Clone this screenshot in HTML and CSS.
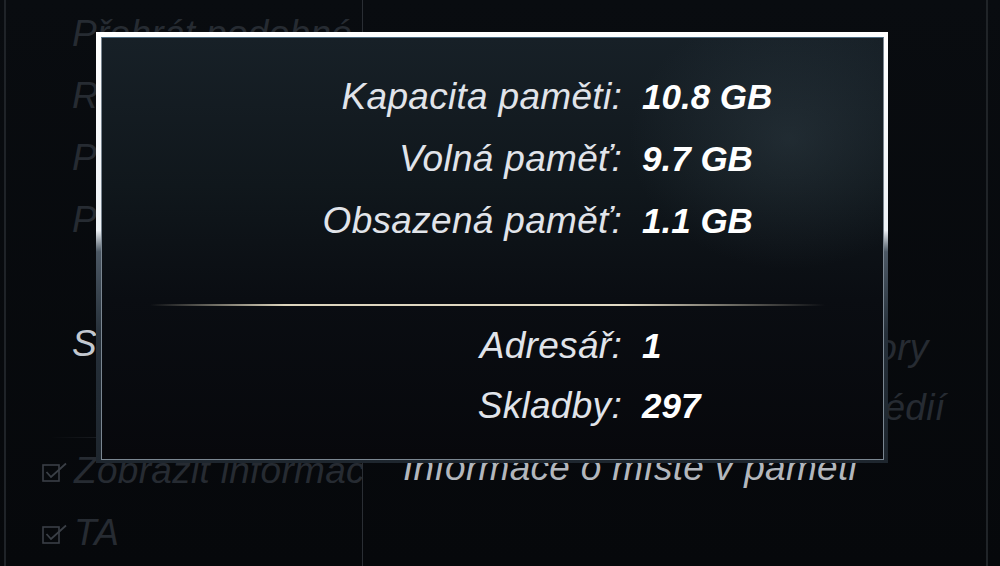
FILE: index.html
```html
<!DOCTYPE html>
<html lang="cs">
<head>
    <meta charset="UTF-8">
    <meta name="viewport" content="width=device-width, initial-scale=1.0">
    <title>Informace o místě v paměti</title>
    <link rel="stylesheet" href="styles.css">
</head>
<body>
    <div class="screen">
        <!-- menu v pozadí -->
        <ul class="menu menu-left">
            <li>Přehrát podobné</li>
            <li>Režim přehrávání</li>
            <li>Playlisty</li>
            <li>Procházet složky</li>
            <li class="blank"></li>
            <li class="active">Skladby podle alba</li>
            <li class="sep"></li>
            <li class="check">
                <svg width="26" height="20" viewBox="0 0 26 20"><rect x="1" y="3" width="16" height="16" fill="none" stroke="currentColor" stroke-width="1.6"/><path d="M4.5 10 L9 15 L24 1.5" fill="none" stroke="currentColor" stroke-width="1.8"/></svg>
                Zobrazit informace
            </li>
            <li class="check">
                <svg width="26" height="20" viewBox="0 0 26 20"><rect x="1" y="3" width="16" height="16" fill="none" stroke="currentColor" stroke-width="1.6"/><path d="M4.5 10 L9 15 L24 1.5" fill="none" stroke="currentColor" stroke-width="1.8"/></svg>
                TA
            </li>
        </ul>

        <ul class="menu menu-right">
            <li>Vymazat všechny MP3 soubory</li>
            <li>Kopírovat data z externích médií</li>
            <li class="active">Informace o místě v paměti</li>
        </ul>

        <!-- dialog -->
        <div class="dialog">
            <div class="dialog-body">
                <div class="stats">
                    <div class="label">Kapacita paměti:</div>
                    <div class="value">10.8 GB</div>
                    <div class="label">Volná paměť:</div>
                    <div class="value">9.7 GB</div>
                    <div class="label">Obsazená paměť:</div>
                    <div class="value">1.1 GB</div>
                </div>
                <div class="rule"></div>
                <div class="stats stats-small">
                    <div class="label">Adresář:</div>
                    <div class="value">1</div>
                    <div class="label">Skladby:</div>
                    <div class="value">297</div>
                </div>
            </div>
        </div>
    </div>
</body>
</html>
```
FILE: styles.css
```css
* {
    box-sizing: border-box;
}

body {
    margin: 0;
    background: #07090d;
    font-family: "Liberation Sans", Arial, sans-serif;
    font-style: italic;
}

.screen {
    position: relative;
    width: 1000px;
    height: 566px;
    overflow: hidden;
    display: grid;
    grid-template-columns: 359px 1fr;
    margin: 0;
    padding: 0 12px 0 4px;
    background: linear-gradient(to bottom, #090c10, #06080b);
}

.menu {
    list-style: none;
    margin: 0;
    padding: 0;
    font-size: 37px;
    letter-spacing: 0.3px;
    color: #262b32;
    white-space: nowrap;
    overflow: hidden;
}

.menu-left {
    border-left: 2px solid #1f2328;
    border-right: 1px solid #2a2e34;
    padding-top: 3px;
}

.menu-left li {
    height: 62px;
    line-height: 62px;
    padding-left: 66px;
}

.menu-left li.active {
    color: #c3c8cf;
}

.menu-left li.sep {
    height: 1px;
    margin: 62px 0 2px 44px;
    padding: 0;
    background: linear-gradient(to right, rgba(80, 86, 94, 0), #4a5058 60%, #3a3f46);
}

.menu-left li.check {
    display: flex;
    align-items: center;
    gap: 6px;
    padding-left: 36px;
}

.menu-left li.check svg {
    color: #3a3f46;
    flex: none;
    margin-top: 2px;
}

.menu-right {
    border-right: 2px solid #202428;
    padding: 318px 0 0 40px;
}

.menu-right li {
    height: 60px;
    line-height: 60px;
}

.menu-right li.active {
    color: #b3b7bd;
}

.dialog {
    position: absolute;
    left: 96px;
    top: 32px;
    width: 792px;
    height: 431px;
    padding: 5px 4px 3px 5px;
    background: linear-gradient(to bottom, #ffffff 0%, #eef2f6 46%, #4c5864 51%, #26303a 70%, #1e262e 100%);
}

.dialog-body {
    height: 100%;
    padding-top: 28px;
    border: 1px solid #7a8691;
    border-top-color: #4d6c82;
    background:
        radial-gradient(ellipse 160px 130px at 88% 24%, rgba(70, 88, 98, 0.28), rgba(70, 88, 98, 0)),
        linear-gradient(to bottom, #172027 0%, #10171c 35%, #0a0d12 62%, #07080c 100%);
}

.stats {
    display: grid;
    grid-template-columns: 520px auto;
    column-gap: 20px;
    line-height: 62px;
}

.stats-small {
    line-height: 60px;
}

.label {
    text-align: right;
    font-size: 37px;
    letter-spacing: 0.3px;
    color: #e1e4ea;
}

.value {
    font-size: 35px;
    font-weight: bold;
    color: #ffffff;
}

.rule {
    height: 2px;
    margin: 52px 58px 10px 48px;
    background: linear-gradient(to right, rgba(220, 212, 190, 0), #ddd5bd 20%, #e2dac4 70%, rgba(220, 212, 190, 0));
}
```
